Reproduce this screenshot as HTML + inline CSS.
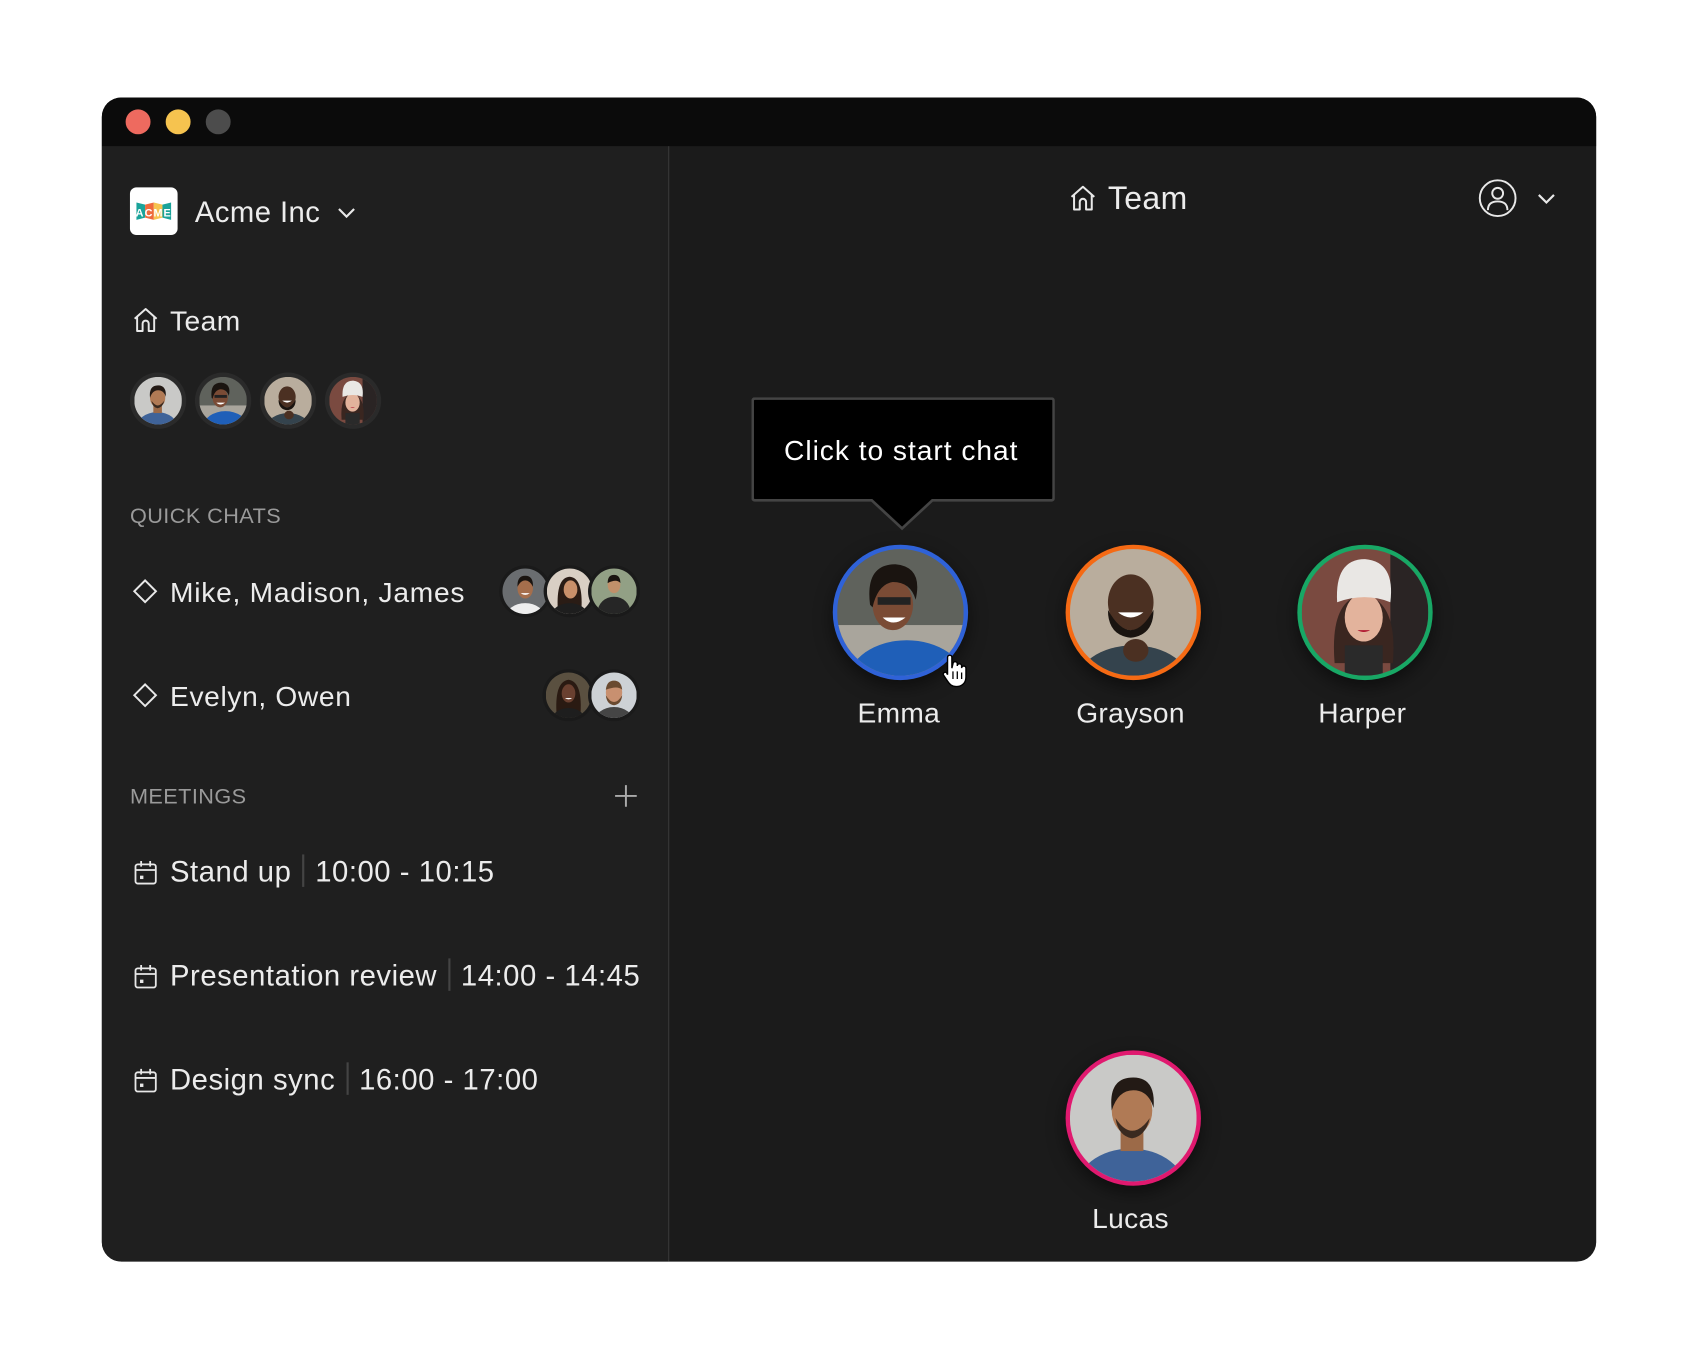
<!DOCTYPE html>
<html><head><meta charset="utf-8"><style>
*{margin:0;padding:0;box-sizing:border-box}
html,body{width:1698px;height:1358px;background:#fff;overflow:hidden}
#s{position:absolute;left:0;top:0;width:1568px;height:1254px;transform:scale(1.08291);transform-origin:0 0;font-family:"Liberation Sans",sans-serif;color:#ececec}
.win{position:absolute;left:94px;top:90px;width:1380px;height:1075px;border-radius:18px;overflow:hidden;background:#1b1b1b}
.tb{position:absolute;left:0;top:0;width:100%;height:45px;background:#0b0b0b}
.dot{position:absolute;top:11px;width:23px;height:23px;border-radius:50%}
.side{position:absolute;left:0;top:45px;width:524px;bottom:0;background:#1f1f1f;border-right:1.5px solid #383838}
.t{position:absolute;white-space:nowrap;line-height:1;letter-spacing:0.4px}
.av{position:absolute;border-radius:50%;overflow:hidden}
.av svg{width:100%;height:100%;display:block}
.ring{position:absolute;border-radius:50%;background:#2a2a2a}
.big{position:absolute;border-radius:50%;padding:4px;box-shadow:0 6px 16px rgba(0,0,0,.5)}
.big .in{width:100%;height:100%;border-radius:50%;overflow:hidden;border:0}
.big svg{width:100%;height:100%;display:block}
.lab{position:absolute;font-size:26px;width:200px;text-align:center;line-height:1;letter-spacing:0.3px}
.sep{display:inline-block;width:2px;height:30px;background:#444;vertical-align:middle;margin:0 10px;position:relative;top:-3px}
</style></head><body>
<svg width="0" height="0" style="position:absolute">
<defs>
<symbol id="lucas" viewBox="0 0 100 100"><rect width="100" height="100" fill="#c9c9c7"/><ellipse cx="48" cy="108" rx="44" ry="34" fill="#3f6399"/><rect x="40" y="58" width="18" height="18" fill="#9c6a48"/><ellipse cx="49" cy="44" rx="16" ry="20" fill="#b07a55"/><path d="M33 44Q30 18 50 18Q68 18 66 42Q62 28 50 28Q38 28 33 44Z" fill="#231a15"/><path d="M36 50Q49 70 63 50Q60 64 49 66Q38 64 36 50Z" fill="#3a2a20"/></symbol>
<symbol id="emma" viewBox="0 0 100 100"><rect width="100" height="100" fill="#5f625c"/><rect width="100" height="40" y="60" fill="#a9a59c"/><ellipse cx="55" cy="104" rx="46" ry="32" fill="#1f5fb8"/><ellipse cx="44" cy="44" rx="16" ry="20" fill="#7a4b35"/><path d="M26 44Q22 12 46 12Q68 14 62 40Q58 26 44 26Q32 28 28 46Z" fill="#1a1410"/><rect x="32" y="38" width="26" height="6" fill="#222"/><path d="M36 54Q44 62 54 54Z" fill="#fff"/></symbol>
<symbol id="grayson" viewBox="0 0 100 100"><rect width="100" height="100" fill="#b9ad9d"/><ellipse cx="50" cy="108" rx="46" ry="32" fill="#34434d"/><ellipse cx="48" cy="42" rx="18" ry="22" fill="#4b3022"/><path d="M30 48Q48 80 66 48Q66 68 48 70Q30 68 30 48Z" fill="#1a1410"/><path d="M38 50Q48 58 58 50Z" fill="#fff"/><ellipse cx="52" cy="80" rx="10" ry="9" fill="#4b3022"/></symbol>
<symbol id="harper" viewBox="0 0 100 100"><rect width="100" height="100" fill="#7a4a40"/><rect x="70" width="30" height="100" fill="#2a2424"/><path d="M26 90Q22 40 48 36Q76 40 72 90Z" fill="#3a2620"/><ellipse cx="49" cy="54" rx="15" ry="19" fill="#e3b39c"/><path d="M28 42Q26 8 50 8Q74 10 70 42Q50 34 28 42Z" fill="#e9e7e4"/><rect x="34" y="76" width="30" height="24" fill="#2a2a2a"/><path d="M44 64Q49 67 54 64Z" fill="#b01830"/></symbol>
<symbol id="mike" viewBox="0 0 100 100"><rect width="100" height="100" fill="#6a6d70"/><ellipse cx="50" cy="110" rx="44" ry="34" fill="#eeeeee"/><ellipse cx="50" cy="44" rx="17" ry="22" fill="#a56e4c"/><path d="M33 40Q32 16 50 16Q68 16 67 40Q60 26 50 26Q40 26 33 40Z" fill="#1a1410"/><path d="M40 54Q50 62 60 54Z" fill="#fff"/></symbol>
<symbol id="madison" viewBox="0 0 100 100"><rect width="100" height="100" fill="#d9cfc4"/><path d="M24 90Q20 20 50 18Q80 20 76 90Z" fill="#2a1c15"/><ellipse cx="50" cy="104" rx="40" ry="28" fill="#1e1e1e"/><ellipse cx="52" cy="46" rx="15" ry="20" fill="#c9906a"/></symbol>
<symbol id="james" viewBox="0 0 100 100"><rect width="100" height="100" fill="#92a085"/><ellipse cx="50" cy="96" rx="36" ry="34" fill="#262626"/><ellipse cx="50" cy="36" rx="14" ry="18" fill="#c0906a"/><path d="M36 32Q36 14 50 14Q64 14 64 32Q56 22 36 32Z" fill="#1a1410"/></symbol>
<symbol id="evelyn" viewBox="0 0 100 100"><rect width="100" height="100" fill="#5a5040"/><path d="M24 96Q18 20 50 16Q82 20 76 96Z" fill="#2a1a12"/><ellipse cx="50" cy="104" rx="36" ry="26" fill="#1e1e1e"/><ellipse cx="50" cy="46" rx="15" ry="20" fill="#6a4030"/><path d="M42 56Q50 62 58 56Z" fill="#fff"/></symbol>
<symbol id="owen" viewBox="0 0 100 100"><rect width="100" height="100" fill="#cdd1d5"/><ellipse cx="50" cy="110" rx="44" ry="34" fill="#454545"/><ellipse cx="50" cy="44" rx="18" ry="22" fill="#c89070"/><path d="M32 50Q50 80 68 50Q66 70 50 72Q34 70 32 50Z" fill="#6a4a30"/><path d="M32 38Q34 18 50 18Q66 18 68 38Q58 28 32 38Z" fill="#6a4a30"/></symbol>
</defs></svg>
<div id="s">
<div class="win">
 <div class="tb">
  <div class="dot" style="left:22px;background:#ee6a5f"></div>
  <div class="dot" style="left:59px;background:#f6c34f"></div>
  <div class="dot" style="left:96px;background:#4c4c4c"></div>
 </div>
 <div class="side"></div>
</div>
<div style="position:absolute;left:120px;top:173px;width:44px;height:44px;background:#fff;border-radius:6px">
 <svg width="44" height="44" viewBox="0 0 44 44"><path d="M6 14l8 2v12l-8 2z" fill="#1aa39a"/><path d="M14 16l8-2v16l-8-2z" fill="#ee6a3c"/><path d="M22 14l8 2v12l-8 2z" fill="#f6c34f"/><path d="M30 16l8-2v16l-8-2z" fill="#1aa39a"/><text x="22" y="27" font-size="10" font-family="Liberation Sans" fill="#fff" text-anchor="middle" font-weight="bold" letter-spacing="1">ACME</text></svg>
</div>
<div class="t" style="left:180px;top:183px;font-size:27px">Acme Inc</div>
<svg style="position:absolute;left:310px;top:188px" width="20" height="16" viewBox="0 0 20 16"><path d="M3 5l7 7 7-7" fill="none" stroke="#e8e8e8" stroke-width="2"/></svg>

<svg style="position:absolute;left:121px;top:282px" width="27" height="27" viewBox="0 0 24 24"><path d="M3 11L12 3l9 8M5 9.5V21h4.5v-6a2.5 2.5 0 015 0v6H19V9.5" fill="none" stroke="#e8e8e8" stroke-width="1.6" stroke-linejoin="round"/></svg>
<div class="t" style="left:157px;top:283px;font-size:26px">Team</div>

<div class="ring" style="left:120px;top:344px;width:52px;height:52px"></div><div class="av" style="left:124px;top:348px;width:44px;height:44px"><svg><use href="#lucas"/></svg></div>
<div class="ring" style="left:180px;top:344px;width:52px;height:52px"></div><div class="av" style="left:184px;top:348px;width:44px;height:44px"><svg><use href="#emma"/></svg></div>
<div class="ring" style="left:240px;top:344px;width:52px;height:52px"></div><div class="av" style="left:244px;top:348px;width:44px;height:44px"><svg><use href="#grayson"/></svg></div>
<div class="ring" style="left:300px;top:344px;width:52px;height:52px"></div><div class="av" style="left:304px;top:348px;width:44px;height:44px"><svg><use href="#harper"/></svg></div>

<div class="t" style="left:120px;top:467px;font-size:20px;color:#9a9a9a">QUICK CHATS</div>

<svg style="position:absolute;left:122px;top:534px" width="24" height="24" viewBox="0 0 24 24"><path d="M12 2L22 12 12 22 2 12z" fill="none" stroke="#e8e8e8" stroke-width="1.8"/></svg>
<div class="t" style="left:157px;top:534px;font-size:26px;letter-spacing:0.7px">Mike, Madison, James</div>
<div class="ring" style="left:461px;top:522px;width:48px;height:48px;background:#1a1a1a"></div><div class="av" style="left:464px;top:525px;width:42px;height:42px"><svg><use href="#mike"/></svg></div>
<div class="ring" style="left:502px;top:522px;width:48px;height:48px;background:#1a1a1a"></div><div class="av" style="left:505px;top:525px;width:42px;height:42px"><svg><use href="#madison"/></svg></div>
<div class="ring" style="left:543px;top:522px;width:48px;height:48px;background:#1a1a1a"></div><div class="av" style="left:546px;top:525px;width:42px;height:42px"><svg><use href="#james"/></svg></div>

<svg style="position:absolute;left:122px;top:630px" width="24" height="24" viewBox="0 0 24 24"><path d="M12 2L22 12 12 22 2 12z" fill="none" stroke="#e8e8e8" stroke-width="1.8"/></svg>
<div class="t" style="left:157px;top:630px;font-size:26px;letter-spacing:0.6px">Evelyn, Owen</div>
<div class="ring" style="left:501px;top:618px;width:48px;height:48px;background:#1a1a1a"></div><div class="av" style="left:504px;top:621px;width:42px;height:42px"><svg><use href="#evelyn"/></svg></div>
<div class="ring" style="left:543px;top:618px;width:48px;height:48px;background:#1a1a1a"></div><div class="av" style="left:546px;top:621px;width:42px;height:42px"><svg><use href="#owen"/></svg></div>

<div class="t" style="left:120px;top:726px;font-size:20px;color:#9a9a9a">MEETINGS</div>
<svg style="position:absolute;left:567px;top:724px" width="22" height="22" viewBox="0 0 22 22"><path d="M11 1v20M1 11h20" stroke="#aaa" stroke-width="1.8"/></svg>

<svg style="position:absolute;left:122px;top:793px" width="25" height="25" viewBox="0 0 24 24"><rect x="3" y="5" width="18" height="17" rx="2" fill="none" stroke="#e8e8e8" stroke-width="1.6"/><path d="M3 10h18M8 2v5M16 2v5" stroke="#e8e8e8" stroke-width="1.6"/><rect x="7" y="15" width="3" height="3" fill="#e8e8e8"/></svg>
<div class="t" style="left:157px;top:792px;font-size:27px;letter-spacing:0.5px">Stand up<span class="sep"></span>10:00 - 10:15</div>
<svg style="position:absolute;left:122px;top:889px" width="25" height="25" viewBox="0 0 24 24"><rect x="3" y="5" width="18" height="17" rx="2" fill="none" stroke="#e8e8e8" stroke-width="1.6"/><path d="M3 10h18M8 2v5M16 2v5" stroke="#e8e8e8" stroke-width="1.6"/><rect x="7" y="15" width="3" height="3" fill="#e8e8e8"/></svg>
<div class="t" style="left:157px;top:888px;font-size:27px;letter-spacing:0.5px">Presentation review<span class="sep"></span>14:00 - 14:45</div>
<svg style="position:absolute;left:122px;top:985px" width="25" height="25" viewBox="0 0 24 24"><rect x="3" y="5" width="18" height="17" rx="2" fill="none" stroke="#e8e8e8" stroke-width="1.6"/><path d="M3 10h18M8 2v5M16 2v5" stroke="#e8e8e8" stroke-width="1.6"/><rect x="7" y="15" width="3" height="3" fill="#e8e8e8"/></svg>
<div class="t" style="left:157px;top:984px;font-size:27px;letter-spacing:0.5px">Design sync<span class="sep"></span>16:00 - 17:00</div>

<svg style="position:absolute;left:986px;top:169px" width="28" height="28" viewBox="0 0 24 24"><path d="M3 11L12 3l9 8M5 9.5V21h4.5v-6a2.5 2.5 0 015 0v6H19V9.5" fill="none" stroke="#e8e8e8" stroke-width="1.6" stroke-linejoin="round"/></svg>
<div class="t" style="left:1023px;top:169px;font-size:29.5px">Team</div>
<svg style="position:absolute;left:1365px;top:165px" width="36" height="36" viewBox="0 0 36 36"><circle cx="18" cy="18" r="16.5" fill="none" stroke="#e8e8e8" stroke-width="1.8"/><circle cx="18" cy="13.5" r="5" fill="none" stroke="#e8e8e8" stroke-width="1.8"/><path d="M9 29Q9 21 18 21Q27 21 27 29" fill="none" stroke="#e8e8e8" stroke-width="1.8"/></svg>
<svg style="position:absolute;left:1418px;top:176px" width="20" height="16" viewBox="0 0 20 16"><path d="M3 4l7 7 7-7" fill="none" stroke="#e8e8e8" stroke-width="2"/></svg>

<svg style="position:absolute;left:694px;top:367px" width="280" height="124" viewBox="0 0 280 124"><path d="M3 1H277a2 2 0 012 2V93a2 2 0 01-2 2H167L139 121 111 95H3a2 2 0 01-2-2V3a2 2 0 012-2z" fill="#000" stroke="#444" stroke-width="2.5"/></svg>
<div class="t" style="left:724px;top:403px;font-size:26px;color:#fff;letter-spacing:0.9px">Click to start chat</div>

<div class="big" style="left:769px;top:503px;width:125px;height:125px;background:#2f62d8"><div class="in"><svg><use href="#emma"/></svg></div></div>
<div class="lab" style="left:730px;top:645px">Emma</div>
<div class="big" style="left:984px;top:503px;width:125px;height:125px;background:#f56a14"><div class="in"><svg><use href="#grayson"/></svg></div></div>
<div class="lab" style="left:944px;top:645px">Grayson</div>
<div class="big" style="left:1198px;top:503px;width:125px;height:125px;background:#18a765"><div class="in"><svg><use href="#harper"/></svg></div></div>
<div class="lab" style="left:1158px;top:645px">Harper</div>
<div class="big" style="left:984px;top:970px;width:125px;height:125px;background:#e0196f"><div class="in"><svg><use href="#lucas"/></svg></div></div>
<div class="lab" style="left:944px;top:1112px">Lucas</div>

<svg style="position:absolute;left:868px;top:604px" width="30" height="32" viewBox="0 0 30 32"><path d="M7 3a2 2 0 014 0v10l1-4a2 2 0 014 0v2a2 2 0 014 0v2a2 2 0 014 0v8c0 6-4 9-9 9-4 0-6-2-8-5L3 19a2 2 0 013-2l1 2z" fill="#fff" stroke="#000" stroke-width="1.3"/><path d="M12 16v7M16 16v7M20 17v6" stroke="#000" stroke-width="1.2"/></svg>
</div>
</body></html>
